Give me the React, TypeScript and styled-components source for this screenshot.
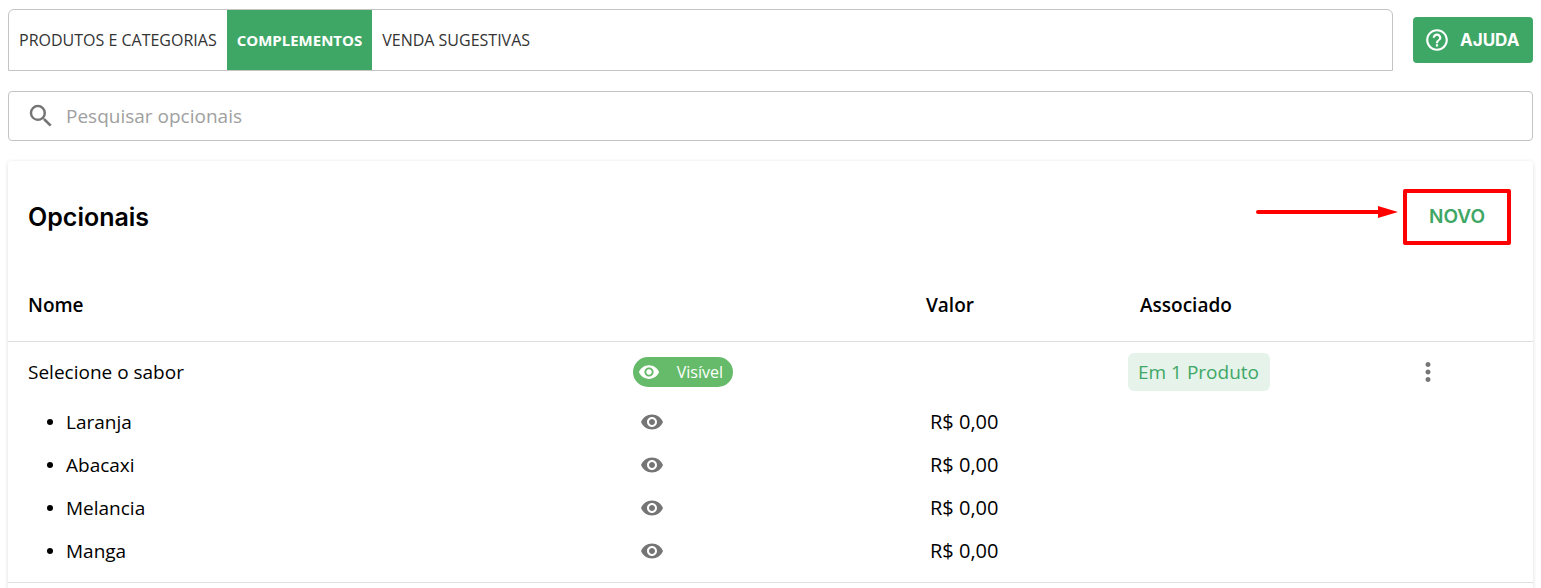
import React from "react";
import styled, { createGlobalStyle } from "styled-components";
import { MdHelpOutline, MdMoreVert, MdSearch, MdVisibility } from "react-icons/md";

const GREEN = "#3fa766";

const GlobalStyle = createGlobalStyle`
  *, *::before, *::after { box-sizing: border-box; }
  body {
    margin: 0;
    background: #fff;
    color: #000;
    font-family: "Open Sans", "Liberation Sans", sans-serif;
    font-size: 19px;
    line-height: 28px;
  }
  button, input { font: inherit; }
`;

const Page = styled.main`
  display: flex;
  flex-direction: column;
  gap: 20px;
  min-height: 100vh;
  padding: 9px 8px 0;
  overflow: hidden;
`;

const TopBar = styled.div`
  display: flex;
  align-items: center;
  gap: 20px;
`;

const Tabs = styled.nav`
  display: flex;
  flex: 1;
  height: 62px;
  border: 1px solid #c4c4c4;
  border-radius: 6px 6px 0 0;
`;

const Tab = styled.a<{ $active?: boolean }>`
  display: flex;
  align-items: center;
  padding: 0 10px;
  font-size: ${({ $active }) => ($active ? 15 : 16)}px;
  font-weight: ${({ $active }) => ($active ? 700 : 500)};
  color: ${({ $active }) => ($active ? "#fff" : "#333")};
  background: ${({ $active }) => ($active ? GREEN : "transparent")};
  text-decoration: none;
  white-space: nowrap;
`;

const HelpButton = styled.button`
  display: flex;
  align-items: center;
  gap: 10px;
  width: 120px;
  height: 46px;
  padding: 0 0 0 11px;
  border: 0;
  border-radius: 4px;
  background: ${GREEN};
  color: #fff;
  font-family: Inter, sans-serif;
  font-size: 17px;
  font-weight: 700;
  cursor: pointer;
`;

const SearchField = styled.label`
  display: flex;
  align-items: center;
  gap: 10px;
  height: 50px;
  padding: 0 17px;
  border: 1px solid #c4c4c4;
  border-radius: 4px;
  color: #757575;
`;

const SearchInput = styled.input`
  flex: 1;
  min-width: 0;
  padding: 0;
  border: 0;
  outline: 0;
  background: none;
  color: #000;
  &::placeholder { color: #a0a0a0; opacity: 1; }
`;

const Card = styled.section`
  flex: 1;
  border-radius: 4px 4px 0 0;
  box-shadow: 0 1px 4px rgba(0, 0, 0, 0.14);
`;

const CardHeader = styled.header`
  display: flex;
  align-items: center;
  justify-content: space-between;
  height: 108px;
  padding: 3px 22px 0 20px;
`;

const Title = styled.h1`
  margin: 0;
  font-family: Inter, sans-serif;
  font-size: 25px;
  font-weight: 600;
`;

const Highlight = styled.div`
  position: relative;
  border: 4px solid #f00;
  border-radius: 2px;
`;

const Arrow = styled.svg`
  position: absolute;
  right: 100%;
  top: 12px;
  margin-right: 9px;
`;

const NewButton = styled.button`
  display: block;
  width: 100px;
  height: 48px;
  padding: 0;
  border: 0;
  background: none;
  color: ${GREEN};
  font-family: Inter, sans-serif;
  font-size: 19px;
  font-weight: 600;
  cursor: pointer;
`;

const Table = styled.table`
  width: 100%;
  table-layout: fixed;
  border-collapse: collapse;
`;

const Column = styled.col<{ $width?: number }>`
  width: ${({ $width }) => ($width ? `${$width}px` : "auto")};
`;

const HeadCell = styled.th<{ $indent?: number }>`
  height: 72px;
  padding: 0 0 0 ${({ $indent }) => $indent ?? 16}px;
  border-bottom: 1px solid #e0e0e0;
  text-align: left;
  font-weight: 600;
`;

const Group = styled.tbody`
  border-bottom: 1px solid #e0e0e0;
  &::after {
    content: "";
    display: block;
    height: 10px;
  }
`;

const Cell = styled.td<{ $indent?: number }>`
  height: 43px;
  padding: 0 0 0 ${({ $indent }) => $indent ?? 16}px;
`;

const GroupCell = styled(Cell)`
  height: 59px;
  padding-top: 2px;
`;

const PriceCell = styled(Cell)`
  font-size: 20px;
`;

const ItemName = styled.div`
  display: flex;
  align-items: center;
  gap: 13px;
  &::before {
    content: "";
    width: 6px;
    height: 6px;
    border-radius: 50%;
    background: #000;
  }
`;

const VisiblePill = styled.button`
  display: flex;
  align-items: center;
  justify-content: space-between;
  width: 100px;
  height: 30px;
  padding: 0 10px 0 5px;
  border: 0;
  border-radius: 15px;
  background: #66bb6a;
  color: #fff;
  font-size: 16px;
  line-height: 24px;
  cursor: pointer;
`;

const ProductBadge = styled.span`
  display: inline-flex;
  align-items: center;
  height: 38px;
  padding: 0 11px 0 10px;
  border-radius: 6px;
  background: #e5f3ea;
  color: ${GREEN};
`;

const IconButton = styled.button`
  display: flex;
  align-items: center;
  justify-content: center;
  width: 38px;
  height: 30px;
  padding: 0;
  border: 0;
  background: none;
  color: #757575;
  cursor: pointer;
`;

const items = ["Laranja", "Abacaxi", "Melancia", "Manga"];

export default function App() {
  return (
    <>
      <GlobalStyle />
      <Page>
        <TopBar>
          <Tabs>
            <Tab href="#produtos">PRODUTOS E CATEGORIAS</Tab>
            <Tab href="#complementos" $active aria-current="page">COMPLEMENTOS</Tab>
            <Tab href="#vendas">VENDA SUGESTIVAS</Tab>
          </Tabs>
          <HelpButton type="button">
            <MdHelpOutline size={26} />
            AJUDA
          </HelpButton>
        </TopBar>
        <SearchField>
          <MdSearch size={30} />
          <SearchInput type="text" placeholder="Pesquisar opcionais" aria-label="Pesquisar opcionais" />
        </SearchField>
        <Card>
          <CardHeader>
            <Title>Opcionais</Title>
            <Highlight>
              <Arrow width="142" height="14" viewBox="0 0 142 14" aria-hidden="true">
                <path d="M2 7H124" stroke="#f00" strokeWidth="4" strokeLinecap="round" />
                <path d="M122 1L142 7L122 13Z" fill="#f00" />
              </Arrow>
              <NewButton type="button">NOVO</NewButton>
            </Highlight>
          </CardHeader>
          <Table>
            <colgroup>
              <Column />
              <Column $width={293} />
              <Column $width={202} />
              <Column $width={281} />
              <Column $width={140} />
            </colgroup>
            <thead>
              <tr>
                <HeadCell scope="col" $indent={20}>Nome</HeadCell>
                <HeadCell as="td" />
                <HeadCell scope="col">Valor</HeadCell>
                <HeadCell scope="col" $indent={28}>Associado</HeadCell>
                <HeadCell as="td" />
              </tr>
            </thead>
            <Group>
              <tr>
                <GroupCell $indent={20}>Selecione o sabor</GroupCell>
                <GroupCell>
                  <VisiblePill type="button">
                    <MdVisibility size={22} />
                    Visível
                  </VisiblePill>
                </GroupCell>
                <GroupCell />
                <GroupCell><ProductBadge>Em 1 Produto</ProductBadge></GroupCell>
                <GroupCell>
                  <IconButton type="button" aria-label="Mais opções"><MdMoreVert size={30} /></IconButton>
                </GroupCell>
              </tr>
              {items.map((name) => (
                <tr key={name}>
                  <Cell $indent={39}><ItemName>{name}</ItemName></Cell>
                  <Cell>
                    <IconButton type="button" aria-label={`Visibilidade de ${name}`}><MdVisibility size={24} /></IconButton>
                  </Cell>
                  <PriceCell $indent={20}>R$ 0,00</PriceCell>
                  <Cell />
                  <Cell />
                </tr>
              ))}
            </Group>
          </Table>
        </Card>
      </Page>
    </>
  );
}
